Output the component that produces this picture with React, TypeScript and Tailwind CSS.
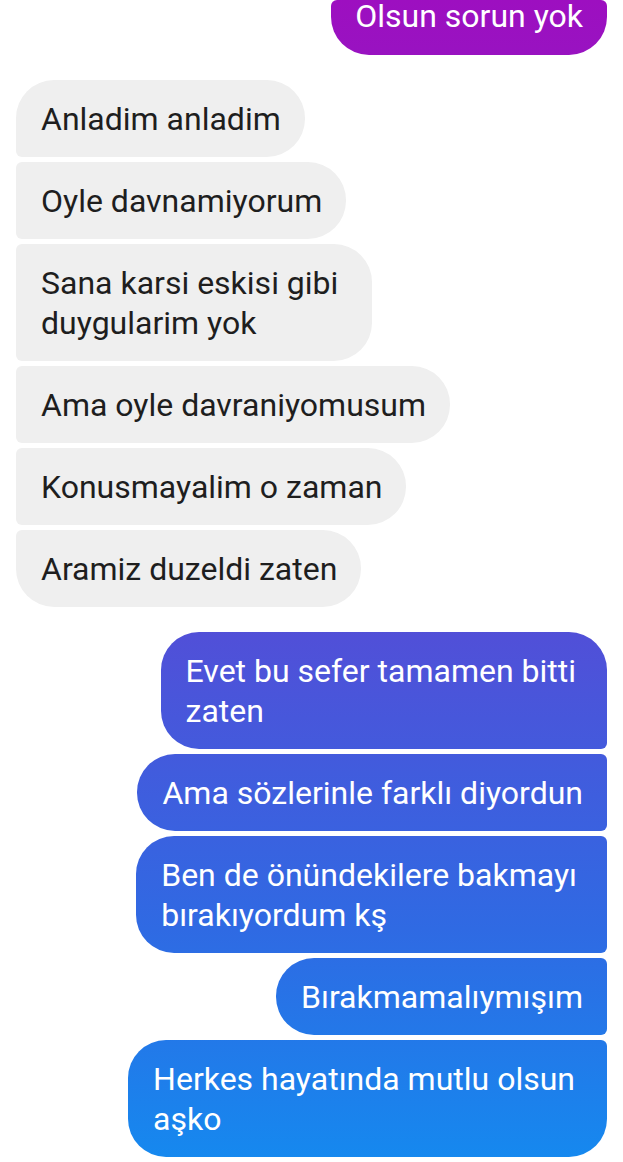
const grad =
  "bg-fixed bg-[linear-gradient(180deg,#9d0fc0_0%,#8a1ec4_20%,#5050d8_55%,#2f6ae3_80%,#1589ef_100%)]";

type Msg = { lines: string[]; corners: string; pr: string };

const received: Msg[] = [
  { lines: ["Anladim anladim"], corners: "rounded-tl-[38px] rounded-bl-[6px]", pr: "pr-6" },
  { lines: ["Oyle davnamiyorum"], corners: "rounded-tl-[6px] rounded-bl-[6px]", pr: "pr-6" },
  { lines: ["Sana karsi eskisi gibi", "duygularim yok"], corners: "rounded-tl-[6px] rounded-bl-[6px]", pr: "pr-[34px]" },
  { lines: ["Ama oyle davraniyomusum"], corners: "rounded-tl-[6px] rounded-bl-[6px]", pr: "pr-6" },
  { lines: ["Konusmayalim o zaman"], corners: "rounded-tl-[6px] rounded-bl-[6px]", pr: "pr-6" },
  { lines: ["Aramiz duzeldi zaten"], corners: "rounded-tl-[6px] rounded-bl-[38px]", pr: "pr-6" },
];

const sent: Msg[] = [
  { lines: ["Evet bu sefer tamamen bitti", "zaten"], corners: "rounded-tr-[38px] rounded-br-[6px]", pr: "pr-[31px]" },
  { lines: ["Ama sözlerinle farklı diyordun"], corners: "rounded-tr-[6px] rounded-br-[6px]", pr: "pr-6" },
  { lines: ["Ben de önündekilere bakmayı", "bırakıyordum kş"], corners: "rounded-tr-[6px] rounded-br-[6px]", pr: "pr-[30px]" },
  { lines: ["Bırakmamalıymışım"], corners: "rounded-tr-[6px] rounded-br-[6px]", pr: "pr-6" },
  { lines: ["Herkes hayatında mutlu olsun", "aşko"], corners: "rounded-tr-[6px] rounded-br-[38px]", pr: "pr-[32px]" },
];

function Text({ lines }: { lines: string[] }) {
  return (
    <>
      {lines.map((l, i) => (
        <span key={i} className="block">{l}</span>
      ))}
    </>
  );
}

export default function App() {
  return (
    <div
      className="w-[623px] h-[1162px] overflow-hidden bg-white flex flex-col text-[32px] leading-[40px]"
      style={{ fontFamily: "Roboto, 'Noto Sans', sans-serif" }}
    >
      <div className="flex justify-end pr-4">
        <div className={`${grad} text-white whitespace-nowrap px-6 pt-0 pb-[23px] leading-[32px] rounded-l-[38px] rounded-tl-[6px] rounded-tr-[6px] rounded-br-[38px]`}>
          Olsun sorun yok
        </div>
      </div>

      <div className="flex flex-col items-start gap-[5px] pl-4 mt-[25px]">
        {received.map((m, i) => (
          <div key={i} className={`bg-[#efefef] text-[#1e1e1e] whitespace-nowrap pl-[25px] ${m.pr} pt-[19px] pb-[18px] rounded-r-[38px] ${m.corners}`}>
            <Text lines={m.lines} />
          </div>
        ))}
      </div>

      <div className="flex flex-col items-end gap-[5px] pr-4 mt-[25px]">
        {sent.map((m, i) => (
          <div key={i} className={`${grad} text-white whitespace-nowrap pl-[25px] ${m.pr} pt-[19px] pb-[18px] rounded-l-[38px] ${m.corners}`}>
            <Text lines={m.lines} />
          </div>
        ))}
      </div>
    </div>
  );
}
